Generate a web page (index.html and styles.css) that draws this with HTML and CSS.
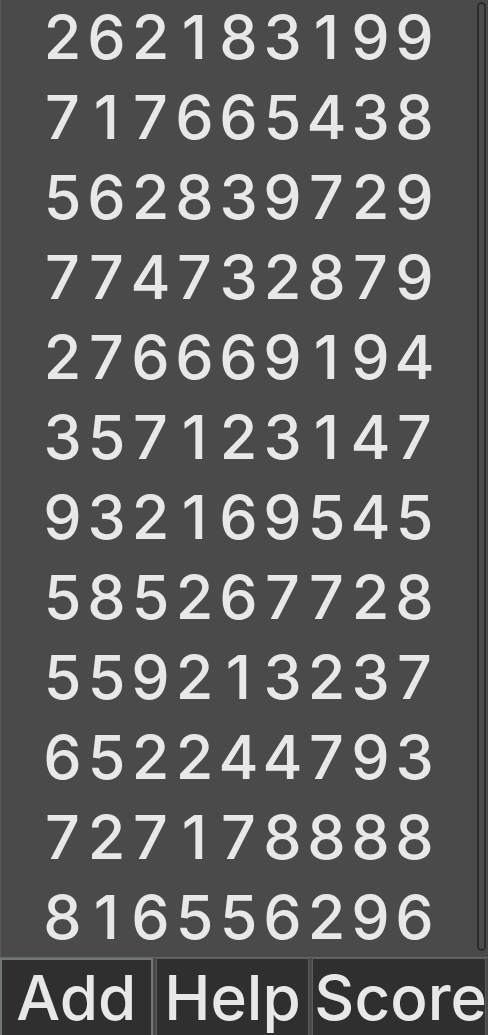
FILE: index.html
```html
<!DOCTYPE html>
<html>
<head>
<meta charset="utf-8">
<link rel="stylesheet" href="styles.css">
</head>
<body>
<div class="app">
  <div class="board">
    <div class="grid">
      <span>2</span><span>6</span><span>2</span><span>1</span><span>8</span><span>3</span><span>1</span><span>9</span><span>9</span>
      <span>7</span><span>1</span><span>7</span><span>6</span><span>6</span><span>5</span><span>4</span><span>3</span><span>8</span>
      <span>5</span><span>6</span><span>2</span><span>8</span><span>3</span><span>9</span><span>7</span><span>2</span><span>9</span>
      <span>7</span><span>7</span><span>4</span><span>7</span><span>3</span><span>2</span><span>8</span><span>7</span><span>9</span>
      <span>2</span><span>7</span><span>6</span><span>6</span><span>6</span><span>9</span><span>1</span><span>9</span><span>4</span>
      <span>3</span><span>5</span><span>7</span><span>1</span><span>2</span><span>3</span><span>1</span><span>4</span><span>7</span>
      <span>9</span><span>3</span><span>2</span><span>1</span><span>6</span><span>9</span><span>5</span><span>4</span><span>5</span>
      <span>5</span><span>8</span><span>5</span><span>2</span><span>6</span><span>7</span><span>7</span><span>2</span><span>8</span>
      <span>5</span><span>5</span><span>9</span><span>2</span><span>1</span><span>3</span><span>2</span><span>3</span><span>7</span>
      <span>6</span><span>5</span><span>2</span><span>2</span><span>4</span><span>4</span><span>7</span><span>9</span><span>3</span>
      <span>7</span><span>2</span><span>7</span><span>1</span><span>7</span><span>8</span><span>8</span><span>8</span><span>8</span>
      <span>8</span><span>1</span><span>6</span><span>5</span><span>5</span><span>6</span><span>2</span><span>9</span><span>6</span>
    </div>
    <div class="scrollbar"><div class="thumb"></div></div>
  </div>
  <div class="buttons">
    <button class="btn btn-add">Add</button>
    <button class="btn btn-help">Help</button>
    <button class="btn btn-score">Score</button>
  </div>
</div>
</body>
</html>
```

FILE: styles.css
```css
* { box-sizing: border-box; }
html, body {
  margin: 0;
  padding: 0;
  background: #4a4a4a;
  height: 1035px;
  overflow: hidden;
}
.app {
  display: flex;
  flex-direction: column;
  height: 1035px;
  font-family: "Inter", "Open Sans", sans-serif;
  color: #e8e8e8;
}
.board {
  display: flex;
  height: 958px;
  border-left: 1px solid #5a5a5a;
  border-bottom: 1px solid #666;
  background: #4a4a4a;
}
.grid {
  flex: 1;
  display: grid;
  grid-template-columns: repeat(9, 44px);
  grid-auto-rows: 80px;
  justify-content: center;
  font-size: 61px;
  font-weight: 500;
}
.grid span {
  display: flex;
  align-items: center;
  justify-content: center;
  line-height: 1;
  padding-bottom: 5px;
}
.scrollbar {
  width: 12px;
  padding: 2px 2px 6px 1px;
}
.thumb {
  height: 100%;
  border: 2px solid #2c2c2c;
  border-radius: 5px;
  background: #4c4c4c;
}
.buttons {
  flex: 1;
  display: flex;
  gap: 3px;
  padding-right: 2px;
}
.btn {
  height: 100%;
  background: #2f2f2f;
  border: 1px solid #5c5c5c;
  color: #e8e8e8;
  font-family: "Inter", "Open Sans", sans-serif;
  font-size: 62px;
  font-weight: 500;
  padding: 0;
  overflow: hidden;
  white-space: nowrap;
  display: flex;
  align-items: center;
  justify-content: center;
}
.btn-add { width: 153px; border: 2px solid #6d777c; }
.btn-help { width: 154px; }
.btn-score { width: 174px; justify-content: flex-start; padding-left: 1px; }
```
